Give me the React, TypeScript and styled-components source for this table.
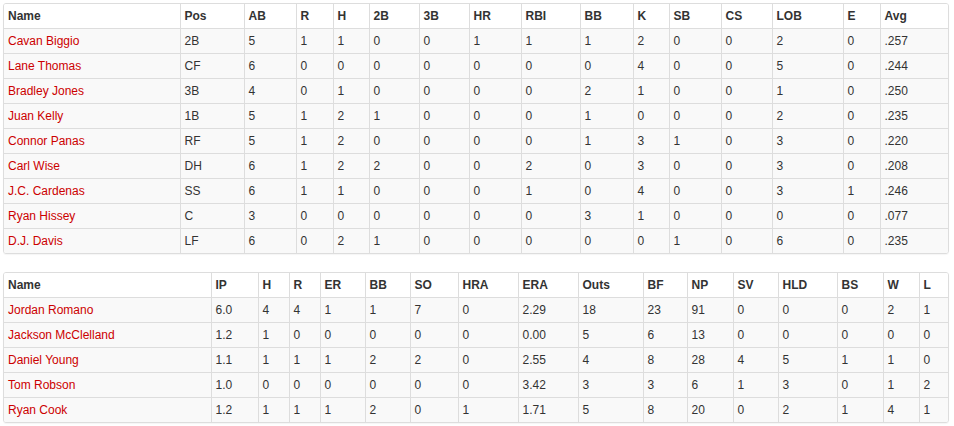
import React from 'react'
import styled, { createGlobalStyle } from 'styled-components'

const GlobalStyle = createGlobalStyle`
  body {
    margin: 0;
    background: #fff;
    font-family: "Liberation Sans", Arial, sans-serif;
    font-size: 12px;
    color: #333;
  }
`

const Page = styled.div`
  padding: 3px 5px 3px 3px;
  display: flex;
  flex-direction: column;
  gap: 18px;
`

const TableBox = styled.div`
  width: 944px;
  border: 1px solid #ddd;
  border-radius: 3px;
  overflow: hidden;
  box-shadow: 0 1px 1px rgba(0, 0, 0, 0.04);
`

const Table = styled.table`
  width: 100%;
  table-layout: fixed;
  border-collapse: collapse;
  border-spacing: 0;
`

const Col = styled.col<{ $w: number }>`
  width: ${(p) => p.$w}px;
`

const HeadCell = styled.th`
  height: 24px;
  padding: 0 4px;
  text-align: left;
  font-weight: bold;
  background: #fff;
  border-left: 1px solid #ddd;
  white-space: nowrap;
  &:first-child {
    border-left: none;
  }
`

const Row = styled.tr`
  background: #f9f9f9;
  border-top: 1px solid #ddd;
`

const Cell = styled.td`
  height: 24px;
  padding: 0 4px;
  border-left: 1px solid #ddd;
  white-space: nowrap;
  &:first-child {
    border-left: none;
  }
`

const PlayerLink = styled.a`
  color: #cc0000;
  text-decoration: none;
`

type StatTableProps = {
  columns: string[]
  widths: number[]
  rows: string[][]
}

const StatTable = ({ columns, widths, rows }: StatTableProps) => (
  <TableBox>
    <Table>
      <colgroup>
        {widths.map((w, i) => (
          <Col key={i} $w={w} />
        ))}
      </colgroup>
      <thead>
        <tr>
          {columns.map((c) => (
            <HeadCell key={c}>{c}</HeadCell>
          ))}
        </tr>
      </thead>
      <tbody>
        {rows.map((r) => (
          <Row key={r[0]}>
            {r.map((v, i) => (
              <Cell key={i}>{i === 0 ? <PlayerLink href="#">{v}</PlayerLink> : v}</Cell>
            ))}
          </Row>
        ))}
      </tbody>
    </Table>
  </TableBox>
)

const battingCols = ['Name', 'Pos', 'AB', 'R', 'H', '2B', '3B', 'HR', 'RBI', 'BB', 'K', 'SB', 'CS', 'LOB', 'E', 'Avg']
const battingWidths = [176, 64, 52, 37, 36, 50, 50, 52, 59, 53, 36, 52, 51, 71, 37, 68]
const batting = [
  ['Cavan Biggio', '2B', '5', '1', '1', '0', '0', '1', '1', '1', '2', '0', '0', '2', '0', '.257'],
  ['Lane Thomas', 'CF', '6', '0', '0', '0', '0', '0', '0', '0', '4', '0', '0', '5', '0', '.244'],
  ['Bradley Jones', '3B', '4', '0', '1', '0', '0', '0', '0', '2', '1', '0', '0', '1', '0', '.250'],
  ['Juan Kelly', '1B', '5', '1', '2', '1', '0', '0', '0', '1', '0', '0', '0', '2', '0', '.235'],
  ['Connor Panas', 'RF', '5', '1', '2', '0', '0', '0', '0', '1', '3', '1', '0', '3', '0', '.220'],
  ['Carl Wise', 'DH', '6', '1', '2', '2', '0', '0', '2', '0', '3', '0', '0', '3', '0', '.208'],
  ['J.C. Cardenas', 'SS', '6', '1', '1', '0', '0', '0', '1', '0', '4', '0', '0', '3', '1', '.246'],
  ['Ryan Hissey', 'C', '3', '0', '0', '0', '0', '0', '0', '3', '1', '0', '0', '0', '0', '.077'],
  ['D.J. Davis', 'LF', '6', '0', '2', '1', '0', '0', '0', '0', '0', '1', '0', '6', '0', '.235'],
]

const pitchingCols = ['Name', 'IP', 'H', 'R', 'ER', 'BB', 'SO', 'HRA', 'ERA', 'Outs', 'BF', 'NP', 'SV', 'HLD', 'BS', 'W', 'L']
const pitchingWidths = [207, 47, 31, 31, 45, 45, 48, 60, 60, 65, 44, 46, 45, 59, 46, 36, 29]
const pitching = [
  ['Jordan Romano', '6.0', '4', '4', '1', '1', '7', '0', '2.29', '18', '23', '91', '0', '0', '0', '2', '1'],
  ['Jackson McClelland', '1.2', '1', '0', '0', '0', '0', '0', '0.00', '5', '6', '13', '0', '0', '0', '0', '0'],
  ['Daniel Young', '1.1', '1', '1', '1', '2', '2', '0', '2.55', '4', '8', '28', '4', '5', '1', '1', '0'],
  ['Tom Robson', '1.0', '0', '0', '0', '0', '0', '0', '3.42', '3', '3', '6', '1', '3', '0', '1', '2'],
  ['Ryan Cook', '1.2', '1', '1', '1', '2', '0', '1', '1.71', '5', '8', '20', '0', '2', '1', '4', '1'],
]

const App = () => (
  <>
    <GlobalStyle />
    <Page>
      <StatTable columns={battingCols} widths={battingWidths} rows={batting} />
      <StatTable columns={pitchingCols} widths={pitchingWidths} rows={pitching} />
    </Page>
  </>
)

export default App
